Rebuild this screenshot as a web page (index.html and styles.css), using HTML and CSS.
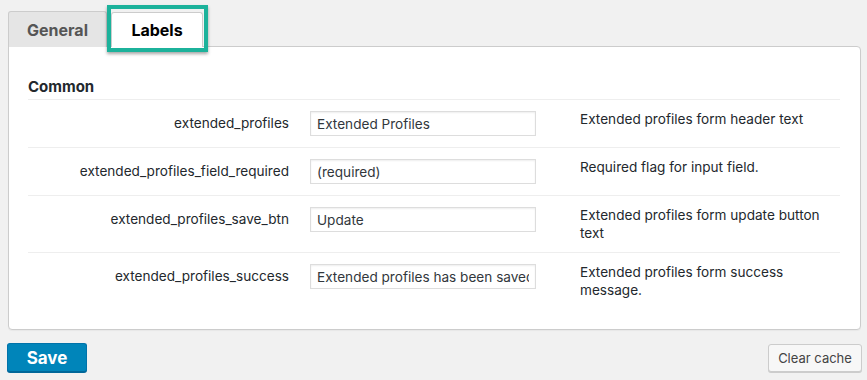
FILE: index.html
```html
<!DOCTYPE html>
<html>
<head>
    <title>Extended Profiles - Labels</title>
    <link rel="stylesheet" href="styles.css">
</head>
<body>
    <div class="tabs">
        <a class="tab">General</a>
        <a class="tab tab-active highlighted">Labels</a>
    </div>

    <div class="panel">
        <h3 class="section-title">Common</h3>

        <div class="row">
            <div class="row-label">extended_profiles</div>
            <div class="row-field"><input type="text" class="text-input" value="Extended Profiles"></div>
            <div class="row-desc">Extended profiles form header text</div>
        </div>

        <div class="row">
            <div class="row-label">extended_profiles_field_required</div>
            <div class="row-field"><input type="text" class="text-input" value="(required)"></div>
            <div class="row-desc">Required flag for input field.</div>
        </div>

        <div class="row">
            <div class="row-label">extended_profiles_save_btn</div>
            <div class="row-field"><input type="text" class="text-input" value="Update"></div>
            <div class="row-desc">Extended profiles form update button text</div>
        </div>

        <div class="row">
            <div class="row-label">extended_profiles_success</div>
            <div class="row-field"><input type="text" class="text-input" value="Extended profiles has been saved."></div>
            <div class="row-desc">Extended profiles form success message.</div>
        </div>
    </div>

    <div class="actions">
        <button class="button button-primary">Save</button>
        <button class="button button-secondary">Clear cache</button>
    </div>
</body>
</html>
```

FILE: styles.css
```css
:root {
    --background: #f1f1f1;
    --surface: #ffffff;
    --border: #cccccc;
    --row-line: #eeeeee;
    --text-primary: #23282d;
    --text-tab: #555555;
    --primary: #0085ba;
    --primary-dark: #006799;
    --highlight: #1cb29b;
}

* {
    margin: 0;
    padding: 0;
    box-sizing: border-box;
}

body {
    font-family: 'Inter', 'Liberation Sans', sans-serif;
    font-size: 13.6px;
    background-color: var(--background);
    color: var(--text-primary);
    width: 867px;
    height: 380px;
    overflow: hidden;
}

.tabs {
    display: flex;
    gap: 4px;
    padding: 11px 0 0 8px;
    height: 47px;
    position: relative;
    z-index: 1;
}

.tab {
    display: flex;
    align-items: center;
    justify-content: center;
    height: 36px;
    padding: 0 17px;
    border: 1px solid var(--border);
    border-bottom: none;
    border-radius: 3px 3px 0 0;
    background-color: #e5e5e5;
    color: var(--text-tab);
    font-size: 16px;
    font-weight: 700;
    width: 99px;
}

.tab-active {
    background-color: var(--surface);
    color: #000;
    width: 92px;
    margin-top: 1px;
    height: 35px;
}

/* annotation box drawn over the active tab */
.highlighted {
    position: relative;
}

.highlighted::after {
    content: '';
    position: absolute;
    left: -5px;
    top: -8px;
    right: -6px;
    bottom: -5px;
    border: 4px solid var(--highlight);
    box-shadow: 0 2px 3px rgba(0, 0, 0, 0.35);
}

.panel {
    margin: -1px 6px 0 8px;
    height: 284px;
    background-color: var(--surface);
    border: 1px solid var(--border);
    border-radius: 0 4px 4px 4px;
    box-shadow: 0 1px 1px rgba(0, 0, 0, 0.04);
    padding: 29px 20px 0 19px;
}

.section-title {
    font-size: 15px;
    font-weight: 700;
    color: var(--text-primary);
    line-height: 22px;
    border-bottom: 1px solid var(--row-line);
    padding-bottom: 1px;
}

.row {
    display: flex;
    align-items: flex-start;
    padding: 11px 0 10px;
    border-bottom: 1px solid var(--row-line);
}

.row:last-child {
    border-bottom: none;
}

.row-label {
    width: 282px;
    padding-right: 21px;
    text-align: right;
    line-height: 25px;
    min-height: 25px;
    color: var(--text-primary);
}

.row-field {
    width: 270px;
    min-height: 26px;
}

.text-input {
    width: 226px;
    height: 25px;
    border: 1px solid #dddddd;
    box-shadow: inset 0 1px 2px rgba(0, 0, 0, 0.07);
    padding: 0 6px;
    font-family: inherit;
    font-size: 13.6px;
    color: #32373c;
    background-color: #fff;
    outline: none;
}

.row-desc {
    width: 240px;
    line-height: 18px;
    margin-top: -1px;
    color: var(--text-primary);
}

.actions {
    display: flex;
    justify-content: space-between;
    align-items: center;
    padding: 13px 5px 0 7px;
}

.button {
    font-family: inherit;
    border-radius: 3px;
    cursor: pointer;
}

.button-primary {
    width: 80px;
    height: 29px;
    background-color: var(--primary);
    border: 1px solid #0073aa;
    border-bottom-color: var(--primary-dark);
    box-shadow: 0 1px 0 var(--primary-dark);
    color: #fff;
    font-size: 17px;
    font-weight: 700;
}

.button-secondary {
    width: 94px;
    height: 28px;
    background-color: #f7f7f7;
    border: 1px solid var(--border);
    box-shadow: 0 1px 0 #cccccc;
    color: #444444;
    font-size: 13px;
}
```
